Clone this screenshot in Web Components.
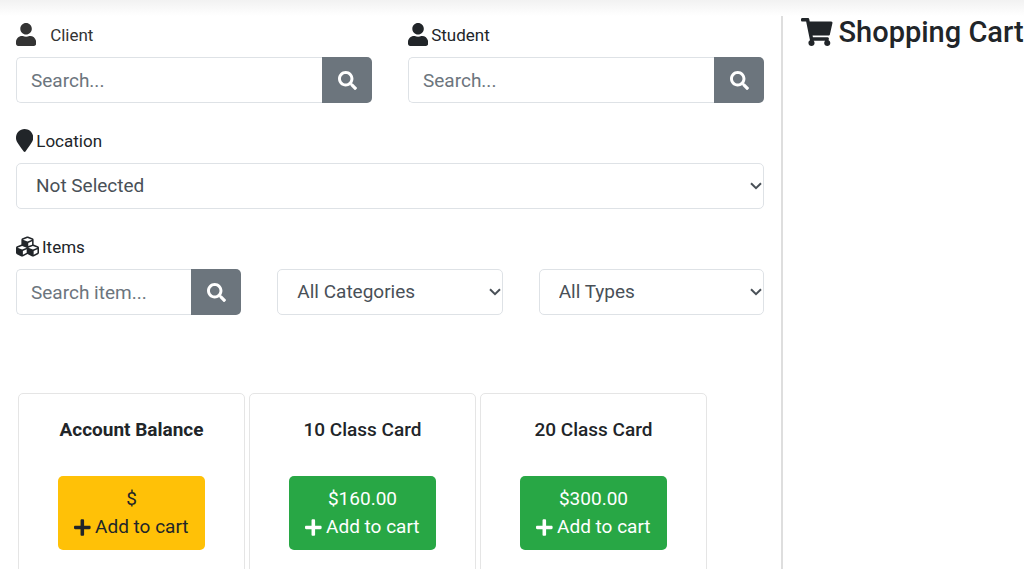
<!DOCTYPE html>
<html lang="en">
<head>
<meta charset="utf-8">
<meta name="viewport" content="width=device-width, initial-scale=1">
<title>Shopping Cart</title>
<style>
  html { scrollbar-width: none; }
  body { margin: 0; background: #fff; color: #212529; font-family: Roboto, "Liberation Sans", sans-serif; font-size: 19px; line-height: 28px; }
</style>
</head>
<body>
<pos-page>
  <pos-row>
    <search-field icon="user" placeholder="Search..." wide-label>Client</search-field>
    <search-field icon="user" placeholder="Search...">Student</search-field>
  </pos-row>
  <pos-row>
    <select-field icon="marker" options="Not Selected">Location</select-field>
  </pos-row>
  <pos-row>
    <search-field icon="cubes" placeholder="Search item...">Items</search-field>
    <select-field name="Category" options="All Categories"></select-field>
    <select-field name="Type" options="All Types"></select-field>
  </pos-row>
  <item-list>
    <item-card price="$" variant="warning" strong>Account Balance</item-card>
    <item-card price="$160.00">10 Class Card</item-card>
    <item-card price="$300.00">20 Class Card</item-card>
  </item-list>
  <cart-heading slot="cart">Shopping Cart</cart-heading>
</pos-page>

<script>
const ICONS = {
  user: [448, "M224 256c70.7 0 128-57.3 128-128S294.7 0 224 0 96 57.3 96 128s57.3 128 128 128zm89.6 32h-16.7c-22.2 10.2-46.9 16-72.9 16s-50.6-5.8-72.9-16h-16.7C60.2 288 0 348.2 0 422.4V464c0 26.5 21.5 48 48 48h352c26.5 0 48-21.5 48-48v-41.6c0-74.2-60.2-134.4-134.4-134.4z"],
  search: [512, "M505 442.7L405.3 343c-4.5-4.5-10.6-7-17-7H372c27.6-35.3 44-79.7 44-128C416 93.1 322.9 0 208 0S0 93.1 0 208s93.1 208 208 208c48.3 0 92.7-16.4 128-44v16.3c0 6.4 2.5 12.5 7 17l99.7 99.7c9.4 9.4 24.6 9.4 33.9 0l28.3-28.3c9.4-9.4 9.4-24.6.1-34zM208 336c-70.7 0-128-57.2-128-128 0-70.7 57.2-128 128-128 70.7 0 128 57.2 128 128 0 70.7-57.2 128-128 128z"],
  marker: [384, "M172.268 501.67C26.97 291.031 0 269.413 0 192 0 85.961 85.961 0 192 0s192 85.961 192 192c0 77.413-26.97 99.031-172.268 309.67-9.535 13.774-29.93 13.773-39.464 0z"],
  cart: [576, "M528.12 301.319l47.273-208C578.806 78.301 567.391 64 551.99 64H159.208l-9.166-44.81C147.758 8.021 137.93 0 126.529 0H24C10.745 0 0 10.745 0 24v16c0 13.255 10.745 24 24 24h69.883l70.248 343.435C147.325 417.1 136 435.222 136 456c0 30.928 25.072 56 56 56s56-25.072 56-56c0-15.674-6.447-29.835-16.824-40h209.647C430.447 426.165 424 440.326 424 456c0 30.928 25.072 56 56 56s56-25.072 56-56c0-22.172-12.888-41.332-31.579-50.405l5.517-24.276c3.413-15.018-8.002-29.319-23.403-29.319H218.117l-6.545-32h293.145c11.206 0 20.92-7.754 23.403-18.681z"],
  plus: [448, "M416 208H272V64c0-17.67-14.33-32-32-32h-32c-17.67 0-32 14.33-32 32v144H32c-17.67 0-32 14.33-32 32v32c0 17.67 14.33 32 32 32h144v144c0 17.67 14.33 32 32 32h32c17.67 0 32-14.33 32-32V304h144c17.67 0 32-14.33 32-32v-32c0-17.67-14.33-32-32-32z"],
  cubes: [512, "M488.6 250.2L392 214V105.5c0-15-9.3-28.4-23.4-33.7l-100-37.5c-8.1-3.1-17.1-3.1-25.3 0l-100 37.5c-14.1 5.3-23.4 18.7-23.4 33.7V214l-96.6 36.2C9.3 255.5 0 268.9 0 283.9V394c0 13.6 7.7 26.1 19.9 32.2l100 50c10.1 5.1 22.1 5.1 32.2 0l103.9-52 103.9 52c10.1 5.1 22.1 5.1 32.2 0l100-50c12.2-6.1 19.9-18.6 19.9-32.2V283.9c0-15-9.3-28.4-23.4-33.7zM358 214.8l-85 31.9v-68.2l85-37v73.3zM154 104.1l102-38.2 102 38.2v.6l-102 41.4-102-41.4v-.6zm84 291.1l-85 42.5v-79.1l85-38.8v75.4zm0-112l-102 41.4-102-41.4v-.6l102-38.2 102 38.2v.6zm240 112l-85 42.5v-79.1l85-38.8v75.4zm0-112l-102 41.4-102-41.4v-.6l102-38.2 102 38.2v.6z"]
};

function define(name, render) {
  customElements.define(name, class extends HTMLElement {
    connectedCallback() {
      if (!this.shadowRoot) this.attachShadow({ mode: "open" }).innerHTML = render(this);
    }
  });
}

/* Solid glyph; its height is set with --size */
define("solid-icon", el => {
  const [width, path] = ICONS[el.getAttribute("name")];
  return `<style>
    :host { display: inline-flex; flex: none; }
    svg { display: block; height: var(--size, 23px); fill: currentColor; }
  </style>
  <svg viewBox="0 0 ${width} 512" aria-hidden="true"><path d="${path}"/></svg>`;
});

define("pos-page", () => `<style>
    :host { display: block; background: linear-gradient(#f2f2f2, #fff 16px) no-repeat; }
    .columns { display: grid; grid-template-columns: minmax(0, 1fr) 241px; padding-top: 16px; min-height: 100vh; box-sizing: border-box; }
    main { display: flex; flex-direction: column; gap: 19px; padding: 0 17px 0 16px; border-right: 2px solid #dedede; }
    aside { padding-left: 18px; }
  </style>
  <div class="columns"><main><slot></slot></main><aside><slot name="cart"></slot></aside></div>`);

define("pos-row", () => `<style>
    :host { display: grid; grid-auto-flow: column; grid-auto-columns: minmax(0, 1fr); gap: 36px; align-items: end; }
  </style><slot></slot>`);

const FIELD_CSS = `
  :host { display: block; }
  label { display: flex; align-items: center; gap: 3px; height: 37px; margin-bottom: 4px; font-size: 17px; }
  label.wide { gap: 14px; color: #333; }
  input, select { box-sizing: border-box; height: 46px; width: 100%; min-width: 0; margin: 0; border: 1px solid #dee2e6; border-radius: 5px; background: #fff; color: #495057; font: inherit; }
`;

define("search-field", el => `<style>${FIELD_CSS}
    .group { display: flex; }
    input { flex: 1; padding: 0 14px; border-right: 0; border-radius: 5px 0 0 5px; }
    input::placeholder { color: #6c757d; opacity: 1; }
    button { --size: 19px; flex: none; display: flex; align-items: center; justify-content: center; width: 50px; border: 0; padding: 0; border-radius: 0 5px 5px 0; background: #6c757d; color: #fff; }
  </style>
  <label for="field" class="${el.hasAttribute("wide-label") ? "wide" : ""}"><solid-icon name="${el.getAttribute("icon")}"></solid-icon><span><slot></slot></span></label>
  <div class="group">
    <input id="field" type="text" placeholder="${el.getAttribute("placeholder")}">
    <button type="button" aria-label="Search"><solid-icon name="search"></solid-icon></button>
  </div>`);

define("select-field", el => {
  const icon = el.getAttribute("icon");
  const label = icon ? `<label for="field"><solid-icon name="${icon}"></solid-icon><span><slot></slot></span></label>` : "";
  const name = icon ? "" : `aria-label="${el.getAttribute("name")}"`;
  const options = el.getAttribute("options").split("|").map(text => `<option>${text}</option>`).join("");
  return `<style>${FIELD_CSS}
    .box { display: grid; align-items: center; }
    .box > * { grid-area: 1 / 1; }
    select { appearance: none; padding: 0 19px; }
    svg { justify-self: end; margin-right: 2px; width: 12px; height: 8px; fill: none; stroke: #495057; stroke-width: 2; pointer-events: none; }
  </style>
  ${label}
  <div class="box"><select id="field" ${name}>${options}</select><svg viewBox="0 0 12 8" aria-hidden="true"><path d="M1 1.2l5 5 5-5"/></svg></div>`;
});

define("item-list", () => `<style>
    :host { display: flex; flex-wrap: wrap; gap: 4px; padding: 59px 2px 0; }
  </style><slot></slot>`);

define("item-card", el => `<style>
    :host { display: flex; flex-direction: column; align-items: center; box-sizing: border-box; width: 227px; padding: 22px 16px 32px; border: 1px solid #e5e5e5; border-radius: 5px; }
    h2 { margin: 0 0 32px; font-size: 19px; line-height: 28px; font-weight: ${el.hasAttribute("strong") ? 700 : 500}; text-align: center; }
    button { --size: 19px; border: 0; border-radius: 5px; padding: 9px 16px; font: inherit; background: #28a745; color: #fff; }
    button.warning { background: #ffc107; color: #212529; }
    span { display: flex; align-items: center; justify-content: center; gap: 4px; }
  </style>
  <h2><slot></slot></h2>
  <button type="button" class="${el.getAttribute("variant") || ""}"><span>${el.getAttribute("price")}</span><span><solid-icon name="plus"></solid-icon>Add to cart</span></button>`);

define("cart-heading", () => `<style>
    :host { display: block; }
    h1 { --size: 28px; display: flex; align-items: center; gap: 6px; margin: 0; font-size: 29px; line-height: 32px; font-weight: 500; white-space: nowrap; }
  </style>
  <h1><solid-icon name="cart"></solid-icon><span><slot></slot></span></h1>`);
</script>
</body>
</html>
